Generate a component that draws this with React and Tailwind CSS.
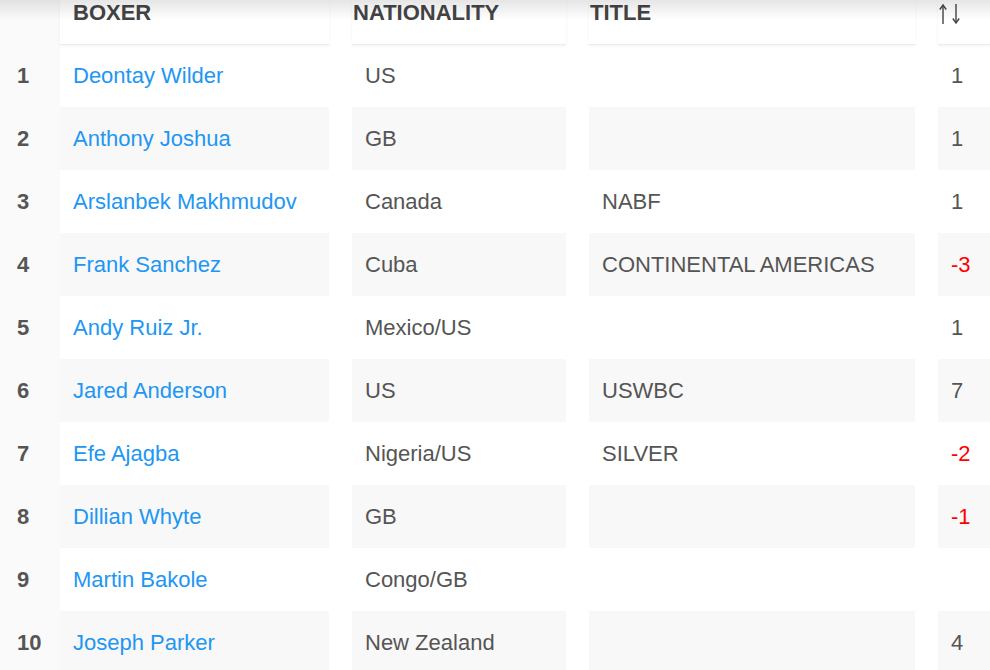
import React from 'react';

const boxers = [
  { rank: 1, name: 'Deontay Wilder', nat: 'US', title: '', change: '1' },
  { rank: 2, name: 'Anthony Joshua', nat: 'GB', title: '', change: '1' },
  { rank: 3, name: 'Arslanbek Makhmudov', nat: 'Canada', title: 'NABF', change: '1' },
  { rank: 4, name: 'Frank Sanchez', nat: 'Cuba', title: 'CONTINENTAL AMERICAS', change: '-3' },
  { rank: 5, name: 'Andy Ruiz Jr.', nat: 'Mexico/US', title: '', change: '1' },
  { rank: 6, name: 'Jared Anderson', nat: 'US', title: 'USWBC', change: '7' },
  { rank: 7, name: 'Efe Ajagba', nat: 'Nigeria/US', title: 'SILVER', change: '-2' },
  { rank: 8, name: 'Dillian Whyte', nat: 'GB', title: '', change: '-1' },
  { rank: 9, name: 'Martin Bakole', nat: 'Congo/GB', title: '', change: '' },
  { rank: 10, name: 'Joseph Parker', nat: 'New Zealand', title: '', change: '4' },
];

const SortIcon = () => (
  <svg width="26" height="22" viewBox="0 0 26 22" fill="none" stroke="#444" strokeWidth="1.4">
    {/* стрелка вверх */}
    <path d="M4 2v19" />
    <path d="M0.8 6.5L4 2l3.2 4.5" />
    {/* стрелка вниз */}
    <path d="M17 1v19" />
    <path d="M13.8 15.5L17 20l3.2-4.5" />
  </svg>
);

const Row = ({ b, striped }) => {
  const cell = `flex items-center px-[13px] ${striped ? 'bg-[#f8f8f8]' : 'bg-white'}`;
  const negative = b.change.startsWith('-');
  return (
    <div className="flex h-[63px]">
      <div className="w-[60px] shrink-0 bg-[#fafafa] flex items-center pl-[17px] font-bold text-[#555]">
        {b.rank}
      </div>
      <div className={`${cell} w-[269px] shrink-0`}>
        <a href="#" className="text-[#2196f3]">{b.name}</a>
      </div>
      <div className={`${cell} w-[214px] shrink-0 ml-[23px]`}>{b.nat}</div>
      <div className={`${cell} w-[326px] shrink-0 ml-[23px]`}>{b.title}</div>
      <div className={`${cell} flex-1 ml-[23px] ${negative ? 'text-[#ff0000]' : ''}`}>{b.change}</div>
    </div>
  );
};

const headShadow = 'shadow-[0_1px_0_#ebebeb,0_2px_3px_rgba(0,0,0,0.05)]';

const App = () => {
  return (
    <div
      className="relative w-[990px] h-[670px] overflow-hidden bg-white text-[22px] text-[#555]"
      style={{ fontFamily: '"Liberation Sans", Arial, sans-serif' }}
    >
      {/* --- ШАПКА ТАБЛИЦЫ --- */}
      <div className="relative z-10 flex h-[44px] font-bold text-[#444] leading-[22px] uppercase">
        <div className="w-[60px] shrink-0 bg-[#fafafa]" />
        <div className={`w-[269px] shrink-0 bg-white pt-[2px] pl-[13px] ${headShadow}`}>Boxer</div>
        <div className={`w-[214px] shrink-0 ml-[23px] bg-white pt-[2px] pl-[1px] ${headShadow}`}>Nationality</div>
        <div className={`w-[326px] shrink-0 ml-[23px] bg-white pt-[2px] pl-[1px] ${headShadow}`}>Title</div>
        <div className={`flex-1 ml-[23px] bg-white pt-[3px] pl-[1px] ${headShadow}`}>
          <SortIcon />
        </div>
      </div>

      {boxers.map((b, i) => (
        <Row key={b.rank} b={b} striped={i % 2 === 1} />
      ))}

      {/* тень сверху */}
      <div className="pointer-events-none absolute inset-x-0 top-0 z-20 h-[20px] bg-gradient-to-b from-black/10 to-transparent" />
    </div>
  );
};

export default App;
